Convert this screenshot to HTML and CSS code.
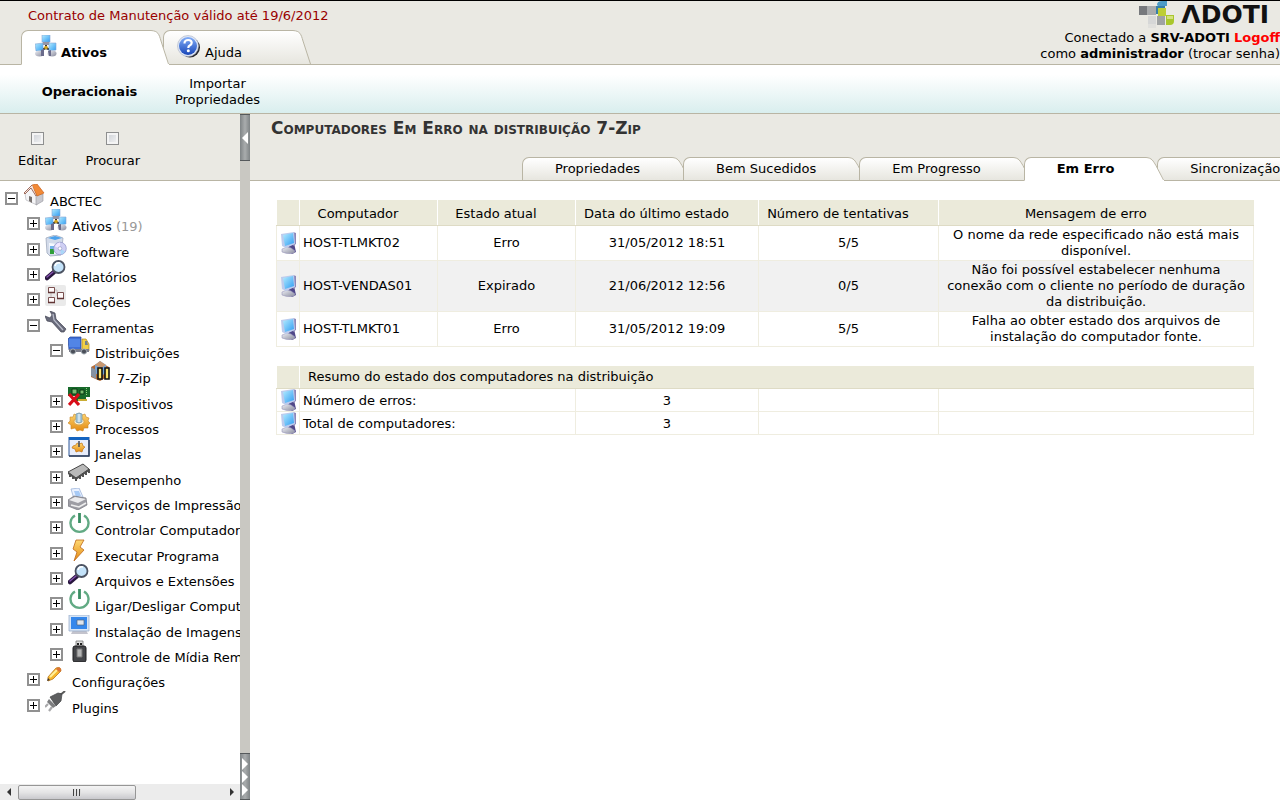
FILE: index.html
```html
<!DOCTYPE html>
<html lang="pt-BR">
<head>
  <meta charset="UTF-8" />
  <title>ADOTI</title>
  <link rel="stylesheet" href="styles.css">
</head>
<body>
  <svg class="defs" aria-hidden="true">
    <defs>
      <linearGradient id="screen" x1="0" y1="0" x2="1" y2="1"><stop offset="0" stop-color="#b5ecff"/><stop offset="1" stop-color="#2f9df2"/></linearGradient>
      <linearGradient id="metal" x1="0" y1="0" x2="1" y2="1"><stop offset="0" stop-color="#eef0f6"/><stop offset="1" stop-color="#888a9c"/></linearGradient>
      <linearGradient id="gold" x1="0" y1="0" x2="0" y2="1"><stop offset="0" stop-color="#ffd873"/><stop offset="1" stop-color="#e38a12"/></linearGradient>
      <linearGradient id="blue" x1="0" y1="0" x2="0" y2="1"><stop offset="0" stop-color="#83aef8"/><stop offset="1" stop-color="#1746b8"/></linearGradient>
      <linearGradient id="tabfill" x1="0" y1="0" x2="0" y2="1"><stop offset="0" stop-color="#fff"/><stop offset="1" stop-color="#e7e6df"/></linearGradient>

      <symbol id="host" viewBox="0 0 16 22">
        <path d="M8 12l5-1 2 9-4 2-4-3z" fill="#4f4788"/>
        <path d="M1 17l5-2 4 1 4 3-1 2q-6 2-12-1z" fill="url(#metal)" stroke="#9c99bd" stroke-width=".6"/>
        <path d="M12 0l3 1v11l-3 2z" fill="#8c87b8"/>
        <path d="M0 2l13-2 1 12-9 4-4-2z" fill="#bccbed"/>
        <path d="M2 3l10-2 1 10-9 3z" fill="url(#screen)"/>
      </symbol>
      <symbol id="network" viewBox="0 0 22 22">
        <path d="M11 8v5M11 13l-5 2M11 13l5 2" stroke="#303030" stroke-width="2"/>
        <path d="M7 0h8v7H7z" fill="url(#screen)" stroke="#86a6d4" stroke-width=".6"/>
        <path d="M8 7h6l2 3H7z" fill="#9495a6"/>
        <circle cx="11" cy="12.500" r="1.800" fill="#d0a11b"/>
        <path d="M0 9l8-1v8H1z" fill="url(#screen)" stroke="#86a6d4" stroke-width=".6"/>
        <path d="M14 8h7v7l-7 1z" fill="url(#screen)" stroke="#86a6d4" stroke-width=".6"/>
        <ellipse cx="4.500" cy="18.500" rx="4.500" ry="3" fill="url(#metal)"/>
        <ellipse cx="17" cy="18.500" rx="4.500" ry="3" fill="url(#metal)"/>
        <path d="M6 15l3-1 0 7-3 0z" fill="#6a6b8b"/>
        <path d="M13 16l3-1v6h-2z" fill="#6a6b8b"/>
      </symbol>
      <symbol id="help" viewBox="0 0 24 24">
        <circle cx="13" cy="12.500" r="10" fill="#28292e"/>
        <circle cx="11" cy="11" r="10.500" fill="#dfe7f6" stroke="#a9b2c4" stroke-width=".6"/>
        <circle cx="11" cy="11" r="9" fill="url(#blue)"/>
        <path d="M7.500 8.500q0-3.500 3.700-3.500 3.500 0 3.500 2.800 0 1.700-2 2.700-1.400.700-1.400 2.500" fill="none" stroke="#fff" stroke-width="2.200"/>
        <circle cx="11.300" cy="15.800" r="1.500" fill="#fff"/>
      </symbol>
      <symbol id="home" viewBox="0 0 22 22">
        <path d="M2 9l7-6 5 8v10l-11-5z" fill="#f5f5f7" stroke="#b8b8bd" stroke-width=".7"/>
        <path d="M13 11l7-1v7l-7 4z" fill="#c9c9cf" stroke="#95959c" stroke-width=".6"/>
        <path d="M9 1l5-1 7 9-7 3z" fill="#f28a36" stroke="#c8601a" stroke-width=".7"/>
        <path d="M9 1L1 9l1 1 6-6 5 8" fill="#f5e7e1" stroke="#8c4d3b" stroke-width=".8"/>
        <path d="M6 12l3 1v6l-3-2z" fill="#77716f"/>
      </symbol>
      <symbol id="software" viewBox="0 0 22 22">
        <path d="M1 3l9-3 8 3-2 17-11 1-3-3z" fill="#d3dbea" stroke="#a0a9be" stroke-width=".8"/>
        <path d="M3 3l7-2 7 2-7 2z" fill="#4aa1ec"/>
        <path d="M4 8l8 1-1 10-6 0z" fill="#f6f9ff"/>
        <path d="M5 14h4v5H5z" fill="#2f9e3a"/>
        <path d="M5 11h5v3H5z" fill="#77b2ea"/>
        <circle cx="15" cy="13.500" r="6.300" fill="#cfcff3" stroke="#8f93c9" stroke-width=".7"/>
        <path d="M15 13.500l-5-2q2-4 5-4z" fill="#f1e5ff"/>
        <path d="M15 13.500l5 3q-2 3-4 3z" fill="#a9d7f8"/>
        <circle cx="15" cy="13.500" r="1.800" fill="#fff" stroke="#8d91be" stroke-width=".6"/>
      </symbol>
      <symbol id="search" viewBox="0 0 22 22">
        <path d="M9 12l-7 6" stroke="#28163e" stroke-width="4.500" stroke-linecap="round"/>
        <path d="M8 12l-6 5" stroke="#8352ad" stroke-width="1.500" stroke-linecap="round"/>
        <circle cx="13.500" cy="7" r="6" fill="#c4e3fa" stroke="#4c5362" stroke-width="1.800"/>
        <path d="M10 6q1-4 5-3" stroke="#fff" stroke-width="1.600" fill="none"/>
      </symbol>
      <symbol id="collections" viewBox="0 0 22 22">
        <rect x="0" y="0" width="21" height="21" rx="2" fill="#eaeaea"/>
        <path d="M6 8v5M9 5h3v6h2" fill="none" stroke="#c5bcbc"/>
        <path d="M3.500 2.500h6v5h-6zM3.500 12.500h6v5h-6zM12.500 7.500h6v6h-6z" fill="#fffafa" stroke="#7b5151"/>
        <path d="M3 7.500h7M3 17.500h7M12 13.500h7" stroke="#613535" stroke-width="1.500"/>
      </symbol>
      <symbol id="wrench" viewBox="0 0 22 22">
        <path d="M5 0l5 2 1 6 10 10-2 3-3 0L7 11l-5-1-2-5 5 2 2-3z" fill="#686a7a" stroke="#464857" stroke-width=".7"/>
        <path d="M8 3l1 6 9 10" stroke="#b8bbc9" stroke-width="1.300" fill="none"/>
      </symbol>
      <symbol id="truck" viewBox="0 0 22 22">
        <path d="M0 3l2-2h11v13H1z" fill="#416fd6" stroke="#234396" stroke-width=".7"/>
        <path d="M1 3h11v8H1z" fill="#5285e6"/>
        <path d="M14 3h4l3 5v7h-7z" fill="#f1cf46" stroke="#a9841b" stroke-width=".7"/>
        <path d="M17 5h2l1 4h-3z" fill="#73828e"/>
        <path d="M1 13h20v3H1z" fill="#7b7d8b"/>
        <circle cx="5" cy="15.500" r="2.600" fill="#4a4f59" stroke="#a5adb4"/>
        <circle cx="16" cy="15.500" r="2.600" fill="#4a4f59" stroke="#a5adb4"/>
      </symbol>
      <symbol id="package" viewBox="0 0 22 22">
        <path d="M1 6l9-5 9 5v9l-9 5-9-4z" fill="#b66b35"/>
        <path d="M5 4l5-4 6 4v7l-5 5-6-4z" fill="#75a4d6"/>
        <path d="M5 4l5-4 6 4-5 3z" fill="#c99870"/>
        <path d="M1 6l5 3v9l-5-3z" fill="#8692a2"/>
        <path d="M8 7h4v11H8zM15 7h4v11h-4z" fill="#ffe66c" stroke="#111" stroke-width="1.600"/>
      </symbol>
      <symbol id="device" viewBox="0 0 22 22">
        <path d="M0 0h22v10h-4v4H8V9H0z" fill="#17692a"/>
        <path d="M4 2h5v5H4zM12 3h4v4h-4z" fill="#78bc70" stroke="#0b3814"/>
        <path d="M10 13h9" stroke="#c9ad34" stroke-width="2"/>
        <path d="M18.500 1v8" stroke="#92d281" stroke-dasharray="1 1"/>
        <path d="M1 7l10 11M11 7L1 18" stroke="#d80d18" stroke-width="3.200"/>
      </symbol>
      <symbol id="gear" viewBox="0 0 22 22">
        <path d="M2 5l3 0 1-3 3 1 2-2 3 2 3-1 1 3 3 1-1 3 2 2-2 2 0 3-4 0-1 3-3-1-3 1-2-3-4 1 0-4-3-2 2-2z" fill="url(#gold)" stroke="#c7862a" stroke-width=".6"/>
        <ellipse cx="11" cy="9.500" rx="5" ry="3.500" fill="#fff3d4" stroke="#d6a550"/>
        <path d="M8 2q3-2 6 0v8q-3 2-6 0z" fill="#a7c7d8" stroke="#7195a8" stroke-width=".7"/>
        <path d="M11 2v8" stroke="#dbeaf2" stroke-width="1.500"/>
      </symbol>
      <symbol id="window" viewBox="0 0 22 22">
        <path d="M1 0h20v19H1z" fill="#e8edfb" stroke="#2c5697"/>
        <path d="M1 0h20v3H1z" fill="#1464c0"/>
        <path d="M21 3v16H1" fill="none" stroke="#323f5a" stroke-width="1.500"/>
        <path d="M5 9l3-1 1-2 2 1 3-1 1 3 2 1-2 2-1 3-3-1-3 1-1-3-3-1z" fill="url(#gold)" stroke="#c67516" stroke-width=".7"/>
        <path d="M11 4v6" stroke="#41485a" stroke-width="1.500"/>
      </symbol>
      <symbol id="chip" viewBox="0 0 22 22">
        <path d="M2 11v3m3-1v3m3-2v4m4-6v4m3-6v4m3-6v4m3-6v4" stroke="#2b2b2b" stroke-width="1.600"/>
        <path d="M0 9l15-8 6 5-13 9z" fill="#b9b9b9" stroke="#464646"/>
        <path d="M0 9l8 6v2l-8-6zM8 15l13-9v2L8 17z" fill="#4e4e4e"/>
      </symbol>
      <symbol id="printer" viewBox="0 0 22 22">
        <path d="M3 1l8-1 4 9-9 2z" fill="#e9f1ff" stroke="#9eb5db" stroke-width=".8"/>
        <path d="M6 3l5 0 2 5-5 1z" fill="#a7caf6"/>
        <path d="M0 12l6-4 12 2 1 7-9 5-10-4z" fill="#9d9da4" stroke="#77777f" stroke-width=".7"/>
        <path d="M1 12l6-3 11 2-8 4z" fill="#ebebed"/>
        <path d="M3 17l8 2 7-4" fill="none" stroke="#eee" stroke-width="1.600"/>
      </symbol>
      <symbol id="power" viewBox="0 0 22 22">
        <path d="M7 2.500a9 8.800 0 1 0 9 0" fill="none" stroke="#62aa84" stroke-width="2.400"/>
        <path d="M11.500 0v10" stroke="#3a8d62" stroke-width="2.800"/>
      </symbol>
      <symbol id="bolt" viewBox="0 0 22 22">
        <path d="M8 1h8l-4 7 4 3L6 22l3-9-4-3z" fill="url(#gold)" stroke="#bd681c" stroke-width=".8"/>
      </symbol>
      <symbol id="image" viewBox="0 0 22 22">
        <path d="M5 15h13l2 4H3z" fill="#c4c4cd"/>
        <path d="M1 0h20v16H1z" fill="#d5e4f6" stroke="#9cafcb" stroke-width=".8"/>
        <path d="M3 2h16v12H3z" fill="#3587eb"/>
        <path d="M9 5h7v5H9z" fill="#dfe5ed" stroke="#52657f" stroke-width=".7"/>
      </symbol>
      <symbol id="usb" viewBox="0 0 22 22">
        <path d="M8 1h7v6H8z" fill="#ddd" stroke="#777" stroke-width=".8"/>
        <path d="M9 3h2v2H9zM12 3h2v2h-2z" fill="#222"/>
        <rect x="5" y="6" width="13" height="16" rx="2" fill="#444549" stroke="#1f1f21"/>
        <path d="M9 9h5v8H9z" fill="#b4b4b4" stroke="#777"/>
      </symbol>
      <symbol id="pencil" viewBox="0 0 22 22">
        <path d="M3 12L11 3q5-2 5 3L8 14l-5 2z" fill="#f7b72c" stroke="#b77720" stroke-width=".8"/>
        <path d="M5 12l7-7" stroke="#fff09b" stroke-width="2"/>
        <path d="M12 3q4-2 4 3l-2 1-3-3z" fill="#dd7435"/>
        <path d="M3 13l2 2-3 1z" fill="#3f352c"/>
      </symbol>
      <symbol id="plug" viewBox="0 0 22 22">
        <path d="M20 0q-3 3-6 4" stroke="#5a5a5a" stroke-width="2" fill="none"/>
        <path d="M5 6l8-4 4 1-1 7-5 5z" fill="#5d5e60" stroke="#424345" stroke-width=".7"/>
        <path d="M4 8l7 7-3 2-6-6z" fill="#7d7e80"/>
        <path d="M3 13l-3 3M7 16l-3 4" stroke="#a9a9ab" stroke-width="2.200"/>
      </symbol>
    </defs>
  </svg>

  <header class="top">
    <div class="top-left">
      <p class="contract">Contrato de Manutenção válido até 19/6/2012</p>
      <nav class="tabs main-tabs">
        <a class="tab active" href="#"><span class="tab-body"><svg class="icon"><use href="#network"/></svg><span>Ativos</span></span><svg class="tab-end" viewBox="0 0 18 34" preserveAspectRatio="none"><path d="M0 .5C7 1 8 4 10 11L18 34H0z"/><path class="edge" d="M0 .5C7 1 8 4 10 11L17.500 34"/></svg></a>
        <a class="tab" href="#"><span class="tab-body"><svg class="icon help"><use href="#help"/></svg><span>Ajuda</span></span><svg class="tab-end" viewBox="0 0 18 34" preserveAspectRatio="none"><path d="M0 .5C7 1 8 4 10 11L18 34H0z"/><path class="edge" d="M0 .5C7 1 8 4 10 11L17.500 34"/></svg></a>
      </nav>
    </div>
    <div class="account">
      <div class="logo">
        <svg class="logo-mark" viewBox="0 0 36 28" aria-hidden="true">
          <path d="M0 5h8v9H0z" fill="#77797d"/><path d="M8 5h9v9H8z" fill="#a9abad"/>
          <path d="M18 4q0-4 5-4h5v5h-9z" fill="#4c9cc7"/><path d="M17 5h9v8h-9z" fill="#367fa9"/>
          <path d="M19 7h8v8h-8z" fill="#bdce35"/><path d="M9 15h8v8H9z" fill="#d6d7d7"/>
          <path d="M18 15h8v9h-8z" fill="#9fa2a3"/><path d="M27 14h8v6q0 4-4 4h-4z" fill="#a9c72c"/>
          <path d="M9 23h8v4H9z" fill="#e0e0dd"/><path d="M28 15h6v3h-6z" fill="#d4e17f"/>
        </svg>
        <span class="logo-name" aria-label="ADOTI">ΛDOTI</span>
      </div>
      <p>Conectado a <b>SRV-ADOTI</b> <a class="logoff" href="#">Logoff</a></p>
      <p>como <b>administrador</b> (<a href="#">trocar senha</a>)</p>
    </div>
  </header>

  <nav class="subnav">
    <a class="current" href="#">Operacionais</a>
    <a href="#">Importar Propriedades</a>
  </nav>

  <div class="layout">
    <aside class="sidebar">
      <div class="tree-options">
        <label><input type="checkbox">Editar</label>
        <label><input type="checkbox">Procurar</label>
      </div>
      <ul class="tree">
        <li><button class="toggle minus" aria-label="Recolher"></button><svg class="icon"><use href="#home"/></svg><a href="#">ABCTEC</a></li>
        <li class="l1"><button class="toggle" aria-label="Expandir"></button><svg class="icon"><use href="#network"/></svg><a href="#">Ativos <span class="count">(19)</span></a></li>
        <li class="l1"><button class="toggle" aria-label="Expandir"></button><svg class="icon"><use href="#software"/></svg><a href="#">Software</a></li>
        <li class="l1"><button class="toggle" aria-label="Expandir"></button><svg class="icon"><use href="#search"/></svg><a href="#">Relatórios</a></li>
        <li class="l1"><button class="toggle" aria-label="Expandir"></button><svg class="icon"><use href="#collections"/></svg><a href="#">Coleções</a></li>
        <li class="l1"><button class="toggle minus" aria-label="Recolher"></button><svg class="icon"><use href="#wrench"/></svg><a href="#">Ferramentas</a></li>
        <li class="l2"><button class="toggle minus" aria-label="Recolher"></button><svg class="icon"><use href="#truck"/></svg><a href="#">Distribuições</a></li>
        <li class="l3"><svg class="icon"><use href="#package"/></svg><a href="#">7-Zip</a></li>
        <li class="l2"><button class="toggle" aria-label="Expandir"></button><svg class="icon"><use href="#device"/></svg><a href="#">Dispositivos</a></li>
        <li class="l2"><button class="toggle" aria-label="Expandir"></button><svg class="icon"><use href="#gear"/></svg><a href="#">Processos</a></li>
        <li class="l2"><button class="toggle" aria-label="Expandir"></button><svg class="icon"><use href="#window"/></svg><a href="#">Janelas</a></li>
        <li class="l2"><button class="toggle" aria-label="Expandir"></button><svg class="icon"><use href="#chip"/></svg><a href="#">Desempenho</a></li>
        <li class="l2"><button class="toggle" aria-label="Expandir"></button><svg class="icon"><use href="#printer"/></svg><a href="#">Serviços de Impressão</a></li>
        <li class="l2"><button class="toggle" aria-label="Expandir"></button><svg class="icon"><use href="#power"/></svg><a href="#">Controlar Computadores</a></li>
        <li class="l2"><button class="toggle" aria-label="Expandir"></button><svg class="icon"><use href="#bolt"/></svg><a href="#">Executar Programa</a></li>
        <li class="l2"><button class="toggle" aria-label="Expandir"></button><svg class="icon"><use href="#search"/></svg><a href="#">Arquivos e Extensões</a></li>
        <li class="l2"><button class="toggle" aria-label="Expandir"></button><svg class="icon"><use href="#power"/></svg><a href="#">Ligar/Desligar Computadores</a></li>
        <li class="l2"><button class="toggle" aria-label="Expandir"></button><svg class="icon"><use href="#image"/></svg><a href="#">Instalação de Imagens</a></li>
        <li class="l2"><button class="toggle" aria-label="Expandir"></button><svg class="icon"><use href="#usb"/></svg><a href="#">Controle de Mídia Removível</a></li>
        <li class="l1"><button class="toggle" aria-label="Expandir"></button><svg class="icon"><use href="#pencil"/></svg><a href="#">Configurações</a></li>
        <li class="l1"><button class="toggle" aria-label="Expandir"></button><svg class="icon"><use href="#plug"/></svg><a href="#">Plugins</a></li>
      </ul>
      <div class="scrollbar">
        <button class="arrow" aria-label="Rolar para a esquerda"><svg viewBox="0 0 4 8"><path d="M4 0v8L0 4z"/></svg></button>
        <div class="track"><div class="thumb"><i></i><i></i><i></i></div></div>
        <button class="arrow" aria-label="Rolar para a direita"><svg viewBox="0 0 4 8"><path d="M0 0v8l4-4z"/></svg></button>
      </div>
    </aside>

    <div class="splitter">
      <button aria-label="Recolher painel"><svg viewBox="0 0 6 12"><path d="M6 0v12L0 6z"/></svg></button>
      <button aria-label="Expandir painel"><svg viewBox="0 0 6 12"><path d="M0 0v12l6-6z"/></svg><svg viewBox="0 0 6 12"><path d="M0 0v12l6-6z"/></svg><svg viewBox="0 0 6 12"><path d="M0 0v12l6-6z"/></svg></button>
    </div>

    <main class="content">
      <div class="content-head">
        <h1>Computadores Em Erro na distribuição 7-Zip</h1>
        <nav class="tabs page-tabs">
          <a class="tab" href="#"><span class="tab-body">Propriedades</span><svg class="tab-end" viewBox="0 0 18 24" preserveAspectRatio="none"><path d="M0 .5C6 1 7 4 10 9L18 24H0z"/><path class="edge" d="M0 .5C6 1 7 4 10 9L17.500 24"/></svg></a>
          <a class="tab" href="#"><span class="tab-body">Bem Sucedidos</span><svg class="tab-end" viewBox="0 0 18 24" preserveAspectRatio="none"><path d="M0 .5C6 1 7 4 10 9L18 24H0z"/><path class="edge" d="M0 .5C6 1 7 4 10 9L17.500 24"/></svg></a>
          <a class="tab" href="#"><span class="tab-body">Em Progresso</span><svg class="tab-end" viewBox="0 0 18 24" preserveAspectRatio="none"><path d="M0 .5C6 1 7 4 10 9L18 24H0z"/><path class="edge" d="M0 .5C6 1 7 4 10 9L17.500 24"/></svg></a>
          <a class="tab active" href="#"><span class="tab-body">Em Erro</span><svg class="tab-end" viewBox="0 0 18 24" preserveAspectRatio="none"><path d="M0 .5C6 1 7 4 10 9L18 24H0z"/><path class="edge" d="M0 .5C6 1 7 4 10 9L17.500 24"/></svg></a>
          <a class="tab" href="#"><span class="tab-body">Sincronização</span></a>
        </nav>
      </div>

      <div class="reports">
        <table class="grid">
          <colgroup><col class="c-icon"><col class="c-host"><col class="c-host"><col class="c-date"><col class="c-tries"><col></colgroup>
          <thead>
            <tr>
              <th></th>
              <th>Computador</th>
              <th>Estado atual</th>
              <th>Data do último estado</th>
              <th>Número de tentativas</th>
              <th>Mensagem de erro</th>
            </tr>
          </thead>
          <tbody>
            <tr>
              <td><svg class="host"><use href="#host"/></svg></td>
              <td class="name">HOST-TLMKT02</td>
              <td>Erro</td>
              <td>31/05/2012 18:51</td>
              <td>5/5</td>
              <td>O nome da rede especificado não está mais disponível.</td>
            </tr>
            <tr class="odd">
              <td><svg class="host"><use href="#host"/></svg></td>
              <td class="name">HOST-VENDAS01</td>
              <td>Expirado</td>
              <td>21/06/2012 12:56</td>
              <td>0/5</td>
              <td>Não foi possível estabelecer nenhuma conexão com o cliente no período de duração da distribuição.</td>
            </tr>
            <tr>
              <td><svg class="host"><use href="#host"/></svg></td>
              <td class="name">HOST-TLMKT01</td>
              <td>Erro</td>
              <td>31/05/2012 19:09</td>
              <td>5/5</td>
              <td>Falha ao obter estado dos arquivos de instalação do computador fonte.</td>
            </tr>
          </tbody>
        </table>

        <table class="grid summary">
          <colgroup><col class="c-icon"><col class="c-host"><col class="c-host"><col class="c-date"><col class="c-tries"><col></colgroup>
          <thead>
            <tr><th></th><th colspan="5">Resumo do estado dos computadores na distribuição</th></tr>
          </thead>
          <tbody>
            <tr>
              <td><svg class="host"><use href="#host"/></svg></td>
              <td class="name" colspan="2">Número de erros:</td>
              <td>3</td><td></td><td></td>
            </tr>
            <tr>
              <td><svg class="host"><use href="#host"/></svg></td>
              <td class="name" colspan="2">Total de computadores:</td>
              <td>3</td><td></td><td></td>
            </tr>
          </tbody>
        </table>
      </div>
    </main>
  </div>
</body>
</html>
```
FILE: styles.css
```css
* {
  box-sizing: border-box;
}
body {
  margin: 0;
  min-height: 100vh;
  display: flex;
  flex-direction: column;
  overflow-x: hidden;
  font: 13px/16px Verdana, "DejaVu Sans", sans-serif;
  color: #000;
  background: #fff;
}
a {
  color: inherit;
  text-decoration: none;
}
p, h1, ul {
  margin: 0;
  padding: 0;
}
button {
  margin: 0;
  padding: 0;
  border: none;
  cursor: pointer;
}
svg {
  display: block;
  flex: none;
}
.defs {
  position: absolute;
  width: 0;
  height: 0;
}
.icon {
  width: 22px;
  height: 22px;
}

/* header */
.top {
  display: flex;
  justify-content: space-between;
  height: 65px;
  background: #eae9e3;
  border-top: 1px solid #000;
  border-bottom: 1px solid #b9b5a4;
}
.top-left {
  display: flex;
  flex-direction: column;
  justify-content: space-between;
  padding: 7px 0 0 21px;
}
.contract {
  padding-left: 7px;
  color: #990000;
}
.account {
  text-align: right;
}
.logo {
  display: flex;
  justify-content: flex-end;
  height: 29px;
  padding-right: 11px;
  gap: 6px;
}
.logo-mark {
  width: 36px;
  height: 28px;
}
.logo-name {
  font: bold 25px/28px "DejaVu Sans", sans-serif;
  color: #111;
}
.logoff {
  font-weight: bold;
  color: #f00;
}

/* tabs */
.tabs {
  display: flex;
  margin-bottom: -1px;
}
.tab {
  display: flex;
  flex: none;
  position: relative;
  height: 24px;
}
.tab + .tab {
  margin-left: -6px;
}
.tab-body {
  display: flex;
  align-items: center;
  border: 1px solid #b9b5a4;
  border-right: none;
  border-top-left-radius: 7px;
  background: linear-gradient(#fff, #e7e6df);
  white-space: nowrap;
}
.tab-end {
  width: 18px;
  height: 100%;
  fill: url(#tabfill);
  border-bottom: 1px solid #b9b5a4;
}
.tab-end .edge {
  fill: none;
  stroke: #b9b5a4;
}
.tab.active {
  z-index: 1;
  font-weight: bold;
}
.active .tab-body {
  background: #fff;
  border-bottom-color: #fff;
}
.active .tab-end {
  fill: #fff;
  border-bottom-color: #fff;
}
.main-tabs .tab {
  height: 35px;
}
.main-tabs .tab-body {
  min-width: 130px;
  padding: 0 13px;
  gap: 4px;
  align-items: flex-start;
}
.main-tabs .tab-body span {
  padding-top: 14px;
}
.main-tabs .icon {
  margin-top: 4px;
}
.main-tabs .help {
  width: 24px;
  height: 24px;
}
.page-tabs {
  padding-left: 272px;
}
.page-tabs .tab + .tab {
  margin-left: -7px;
}
.page-tabs .tab-body {
  padding: 0 32px;
}

.subnav {
  display: flex;
  align-items: center;
  gap: 20px;
  height: 49px;
  padding: 6px 32px 0;
  text-align: center;
  background: linear-gradient(#fff 20%, #d9eeee);
  border-bottom: 1px solid #b9b5a4;
}
.subnav a {
  width: 101px;
}
.subnav .current {
  width: 115px;
  font-weight: bold;
}

.layout {
  flex: 1;
  display: flex;
}

/* sidebar */
.sidebar {
  display: flex;
  flex-direction: column;
  flex: none;
  width: 240px;
  overflow: hidden;
}
.tree-options {
  display: flex;
  gap: 29px;
  height: 67px;
  padding: 18px 18px 0;
  background: #eae9e3;
  border-bottom: 1px solid #b9b5a4;
}
.tree-options label {
  display: flex;
  flex-direction: column;
  align-items: center;
  gap: 8px;
}
.tree-options input {
  appearance: none;
  width: 13px;
  height: 13px;
  margin: 0;
  border: 1px solid #8e8f8f;
  background: linear-gradient(135deg, #cbcfd5, #f6f6f6);
  box-shadow: inset 0 0 0 2px #f4f4f4;
}
.tree {
  flex: 1;
  padding-top: 2px;
  list-style: none;
  white-space: nowrap;
}
.tree li {
  display: flex;
  align-items: flex-start;
  gap: 5px;
  height: 25px;
  padding-left: 5px;
}
.tree li:nth-child(3n+2) {
  height: 26px;
}
.tree .l1 {
  padding-left: 27px;
}
.tree .l2 {
  padding-left: 50px;
}
.tree .l3 {
  padding-left: 90px;
}
.tree .icon {
  margin-top: 1px;
}
.tree a {
  margin-top: 11px;
}
.count {
  color: #999;
}
.toggle {
  flex: none;
  width: 13px;
  height: 13px;
  margin-top: 9px;
  border: 2px solid #919191;
  background:
    linear-gradient(#000, #000) center / 7px 1px no-repeat,
    linear-gradient(#000, #000) center / 1px 7px no-repeat,
    #fff;
}
.toggle.minus {
  background: linear-gradient(#000, #000) center / 7px 1px no-repeat, #fff;
}
.scrollbar {
  display: flex;
  height: 16px;
  background: #ececec;
}
.arrow {
  width: 17px;
  display: flex;
  align-items: center;
  justify-content: center;
  background: none;
}
.arrow svg {
  width: 4px;
  height: 8px;
  fill: #333;
}
.track {
  flex: 1;
  padding: 1px;
}
.thumb {
  display: flex;
  align-items: center;
  justify-content: center;
  gap: 1px;
  width: 58%;
  height: 15px;
  border: 1px solid #969696;
  border-radius: 2px;
  background: linear-gradient(#f4f4f4, #e4e4e5 50%, #c9c9cd);
}
.thumb i {
  width: 2px;
  height: 7px;
  border-left: 1px solid #444;
  background: #ddd;
}

.splitter {
  display: flex;
  flex-direction: column;
  justify-content: space-between;
  flex: none;
  width: 10px;
  background: #c9c8c2;
}
.splitter button {
  display: flex;
  flex-direction: column;
  align-items: center;
  justify-content: center;
  gap: 1px;
  height: 47px;
  border: 1px solid #55595b;
  border-width: 1px 0;
  background: linear-gradient(90deg, #7f8486, #a9acad 50%, #7f8486);
}
.splitter svg {
  width: 6px;
  height: 12px;
  fill: #fff;
}

/* content */
.content {
  flex: 1;
  min-width: 0;
}
.content-head {
  display: flex;
  flex-direction: column;
  justify-content: space-between;
  height: 67px;
  background: #eae9e3;
  border-bottom: 1px solid #b9b5a4;
}
.content h1 {
  padding: 4px 21px 0;
  font-size: 17px;
  line-height: 20px;
  font-variant: small-caps;
  color: #333;
}
.reports {
  padding: 19px 26px;
}
.grid {
  width: 100%;
  table-layout: fixed;
  border-collapse: collapse;
  text-align: center;
}
.grid + .grid {
  margin-top: 19px;
}
.c-icon {
  width: 23px;
}
.c-host {
  width: 138px;
}
.c-date {
  width: 183px;
}
.c-tries {
  width: 180px;
}
.grid th {
  height: 25px;
  padding: 3px 21px 0 0;
  font-weight: normal;
  white-space: nowrap;
  background: #ebeada;
  border-left: 1px solid #fff;
  border-bottom: 1px solid #dedbc5;
}
.grid td {
  padding: 1px 5px;
  border: 1px solid #efede0;
}
.grid td:first-child {
  padding: 0 4px;
}
.grid .name {
  padding-left: 3px;
  text-align: left;
}
.odd {
  background: #f1f1f1;
}
.host {
  width: 16px;
  height: 22px;
}
.grid.summary th {
  height: 23px;
  padding: 1px 8px 0;
  text-align: left;
}
.grid.summary td {
  padding-top: 2px;
}
.grid.summary td:first-child {
  padding-top: 0;
}
```
